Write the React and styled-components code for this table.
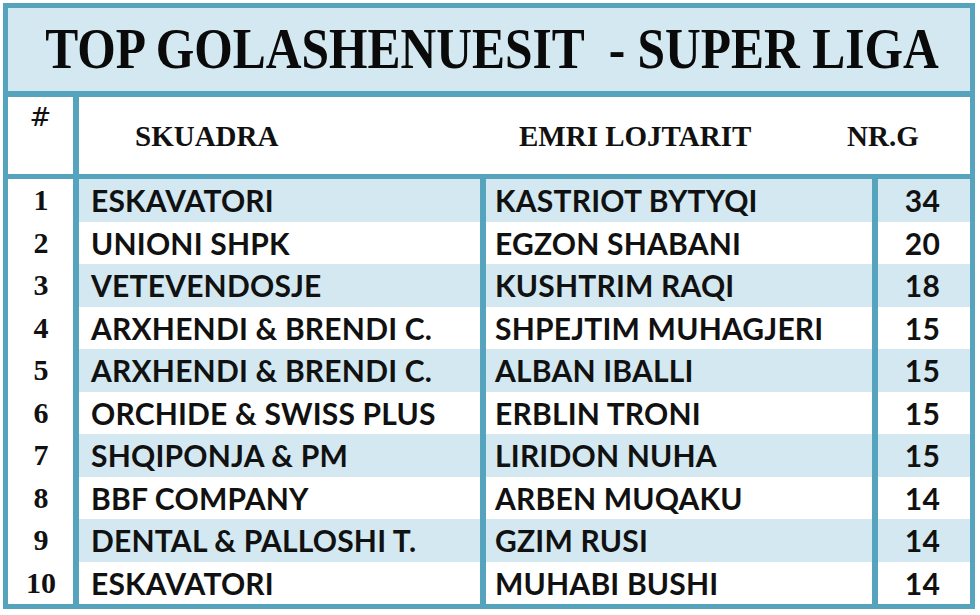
import React from 'react';
import styled, {createGlobalStyle} from 'styled-components';

const GlobalStyle = createGlobalStyle`
    html, body {
        margin: 0;
        padding: 0;
        background: #ffffff;
    }
`;

const TEAL = '#55a3bd';
const LIGHT = '#d3e8f0';

const scorers = [
    {team: 'ESKAVATORI', player: 'KASTRIOT BYTYQI', goals: 34},
    {team: 'UNIONI SHPK', player: 'EGZON SHABANI', goals: 20},
    {team: 'VETEVENDOSJE', player: 'KUSHTRIM RAQI', goals: 18},
    {team: 'ARXHENDI & BRENDI C.', player: 'SHPEJTIM MUHAGJERI', goals: 15},
    {team: 'ARXHENDI & BRENDI C.', player: 'ALBAN IBALLI', goals: 15},
    {team: 'ORCHIDE & SWISS PLUS', player: 'ERBLIN TRONI', goals: 15},
    {team: 'SHQIPONJA & PM', player: 'LIRIDON NUHA', goals: 15},
    {team: 'BBF COMPANY', player: 'ARBEN MUQAKU', goals: 14},
    {team: 'DENTAL & PALLOSHI T.', player: 'GZIM RUSI', goals: 14},
    {team: 'ESKAVATORI', player: 'MUHABI BUSHI', goals: 14},
];

const StyledFrame = styled.div`
    box-sizing: border-box;
    width: 972px;
    height: 606px;
    margin: 3px 0 0 3px;
    border: 5px solid ${TEAL};
    background: ${TEAL};
    display: flex;
    flex-direction: column;
    gap: 6px;
`;

const StyledTitle = styled.h1`
    margin: 0;
    height: 83px;
    background: ${LIGHT};
    display: flex;
    align-items: center;
    justify-content: center;
    font-family: 'Liberation Serif', serif;
    font-weight: 700;
    font-size: 49.5px;
    color: #0a0a0a;
    white-space: pre;
`;

const StyledTitleText = styled.span`
    display: inline-block;
    transform: scaleY(1.15);
    margin-left: 6px;
`;

const StyledHeader = styled.div`
    height: 77px;
    display: grid;
    grid-template-columns: 65px 1fr;
    column-gap: 6px;
`;

const StyledHashCell = styled.div`
    background: #fff;
    font-family: 'DejaVu Serif', serif;
    font-size: 26px;
    text-align: center;
    padding-top: 5px;
    color: #111;
`;

const StyledHeaderLabels = styled.div`
    background: #fff;
    position: relative;
    font-family: 'Liberation Serif', serif;
    font-weight: 700;
    font-size: 29px;
    color: #111;
`;

const StyledHeaderLabel = styled.span`
    position: absolute;
    top: 23px;
    left: ${(props) => props.$left}px;
`;

const StyledBody = styled.div`
    flex: 1;
    display: grid;
    grid-template-columns: 65px 401px 386px 92px;
    grid-auto-rows: 1fr;
    column-gap: 6px;
    margin-top: -1px;
`;

const StyledCell = styled.div`
    background: ${(props) => (props.$shaded ? LIGHT : '#fff')};
    display: flex;
    align-items: center;
    justify-content: ${(props) => props.$justify || 'flex-start'};
    padding: ${(props) => props.$padding || '0'};
    font-family: 'Lato', sans-serif;
    font-weight: 700;
    font-size: 30px;
    letter-spacing: 0.2px;
    color: #111;
    white-space: pre;
`;

const StyledRank = styled(StyledCell)`
    background: #fff;
    font-family: 'Liberation Serif', serif;
    font-size: 30px;
    letter-spacing: 0;
    padding-left: 1px;
`;

export default function App() {
    return (
        <>
            <GlobalStyle />
            <StyledFrame>
                <StyledTitle>
                    <StyledTitleText>{'TOP GOLASHENUESIT  - SUPER LIGA'}</StyledTitleText>
                </StyledTitle>
                <StyledHeader>
                    <StyledHashCell>{'#'}</StyledHashCell>
                    <StyledHeaderLabels>
                        <StyledHeaderLabel $left={56}>{'SKUADRA'}</StyledHeaderLabel>
                        <StyledHeaderLabel $left={440}>{'EMRI LOJTARIT'}</StyledHeaderLabel>
                        <StyledHeaderLabel $left={768}>{'NR.G'}</StyledHeaderLabel>
                    </StyledHeaderLabels>
                </StyledHeader>
                <StyledBody>
                    {scorers.map((row, index) => {
                        const shaded = index % 2 === 0;
                        return (
                            <React.Fragment key={index}>
                                <StyledRank $justify={'center'}>{index + 1}</StyledRank>
                                <StyledCell $shaded={shaded} $padding={'0 0 0 12px'}>
                                    {row.team}
                                </StyledCell>
                                <StyledCell $shaded={shaded} $padding={'0 0 0 9px'}>
                                    {row.player}
                                </StyledCell>
                                <StyledCell $shaded={shaded} $justify={'flex-end'} $padding={'0 30px 0 0'}>
                                    {row.goals}
                                </StyledCell>
                            </React.Fragment>
                        );
                    })}
                </StyledBody>
            </StyledFrame>
        </>
    );
}
